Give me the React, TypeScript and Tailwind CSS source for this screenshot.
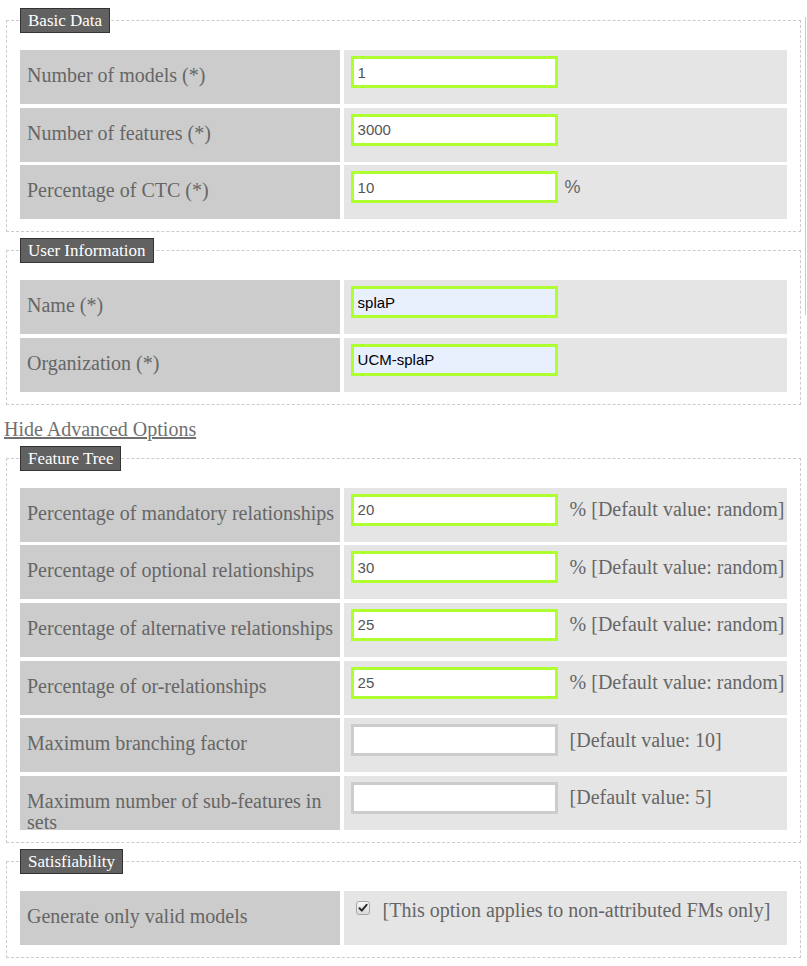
import React from 'react';

interface Field {
  label: string;
  value?: string;
  highlight?: boolean;
  autofill?: boolean;
  note?: string;
  sansNote?: boolean;
  checkbox?: boolean;
}

const basicData: Field[] = [
  {label: 'Number of models (*)', value: '1', highlight: true},
  {label: 'Number of features (*)', value: '3000', highlight: true},
  {label: 'Percentage of CTC (*)', value: '10', highlight: true, note: '%', sansNote: true},
];

const userInfo: Field[] = [
  {label: 'Name (*)', value: 'splaP', highlight: true, autofill: true},
  {label: 'Organization (*)', value: 'UCM-splaP', highlight: true, autofill: true},
];

const featureTree: Field[] = [
  {label: 'Percentage of mandatory relationships', value: '20', highlight: true, note: '% [Default value: random]'},
  {label: 'Percentage of optional relationships', value: '30', highlight: true, note: '% [Default value: random]'},
  {label: 'Percentage of alternative relationships', value: '25', highlight: true, note: '% [Default value: random]'},
  {label: 'Percentage of or-relationships', value: '25', highlight: true, note: '% [Default value: random]'},
  {label: 'Maximum branching factor', value: '', note: '[Default value: 10]'},
  {label: 'Maximum number of sub-features in sets', value: '', note: '[Default value: 5]'},
];

const satisfiability: Field[] = [
  {label: 'Generate only valid models', checkbox: true, note: '[This option applies to non-attributed FMs only]'},
];

function CheckBox() {
  return (
    <span className="mt-[2px] flex h-[14px] w-[14px] shrink-0 items-center justify-center rounded-[3px] border border-[#a6a6a6] bg-gradient-to-b from-[#f7f7f7] to-[#d9d9d9]">
      <svg width="10" height="10" viewBox="0 0 10 10">
        <path d="M1.5 5.2 L3.8 7.6 L8.6 1.8" fill="none" stroke="#2a2a2a" strokeWidth="2" strokeLinecap="round" strokeLinejoin="round" />
      </svg>
    </span>
  );
}

function Row({field}: {field: Field}) {
  const border = field.highlight ? 'border-[#adff2f]' : 'border-[#cccccc]';
  const bg = field.autofill ? 'bg-[#e8f0fe] text-black' : 'bg-white text-[#555555]';
  return (
    <div className="grid h-[54px] grid-cols-[320px_1fr] gap-x-[3.6px]">
      <div className="h-[54px] overflow-hidden bg-[#cccccc] pl-[7px] pr-[2px] pt-[15px] text-[20px] leading-[21px] text-[#666666]">
        {field.label}
      </div>
      <div className="bg-[#e5e5e5] pl-[7px]">
        {field.checkbox ? (
          <div className="flex items-start gap-[13px] pl-[5px] pt-[8px] text-[20px] leading-[23px] text-[#666666]">
            <CheckBox />
            <span>{field.note}</span>
          </div>
        ) : (
          <div className="mt-[6px] flex h-[32px] items-center">
            <input
              readOnly
              value={field.value}
              className={`h-[32px] w-[207px] border-[3px] px-[4px] font-['Liberation_Sans',Arial,sans-serif] text-[15px] outline-none ${border} ${bg}`}
            />
            {field.note &&
              (field.sansNote ? (
                <span className="ml-[7px] font-['Liberation_Sans',Arial,sans-serif] text-[18px] text-[#666666]">
                  {field.note}
                </span>
              ) : (
                <span className="ml-[12px] text-[20px] leading-[23px] text-[#666666]">{field.note}</span>
              ))}
          </div>
        )}
      </div>
    </div>
  );
}

function Section({title, fields, className}: {title: string; fields: Field[]; className?: string}) {
  return (
    <fieldset className={`mx-[2px] border border-dashed border-[#cccccc] px-[13px] pb-[12px] pt-[17px] ${className ?? ''}`}>
      <legend className="h-[25px] border border-[#333333] bg-[#616161] px-[7px] text-[17px] leading-[23px] text-white">
        {title}
      </legend>
      <div className="flex flex-col gap-y-[3.6px]">
        {fields.map((f) => (
          <Row key={f.label} field={f} />
        ))}
      </div>
    </fieldset>
  );
}

export default function App() {
  return (
    <div className="relative min-h-[966px] bg-white px-[4px] pt-[8px] font-['Liberation_Serif','Times_New_Roman',serif]">
      <Section title="Basic Data" fields={basicData} />
      <Section title="User Information" fields={userInfo} className="mt-[6px]" />
      <div className="mt-[13px] text-[20px] leading-[23px]">
        <a href="#" className="text-[#707070] underline">
          Hide Advanced Options
        </a>
      </div>
      <Section title="Feature Tree" fields={featureTree} className="mt-[5px]" />
      <Section title="Satisfiability" fields={satisfiability} className="mt-[6px]" />
      <div className="absolute left-[805px] top-[17px] h-[298px] w-px bg-[#cccccc]" />
    </div>
  );
}
